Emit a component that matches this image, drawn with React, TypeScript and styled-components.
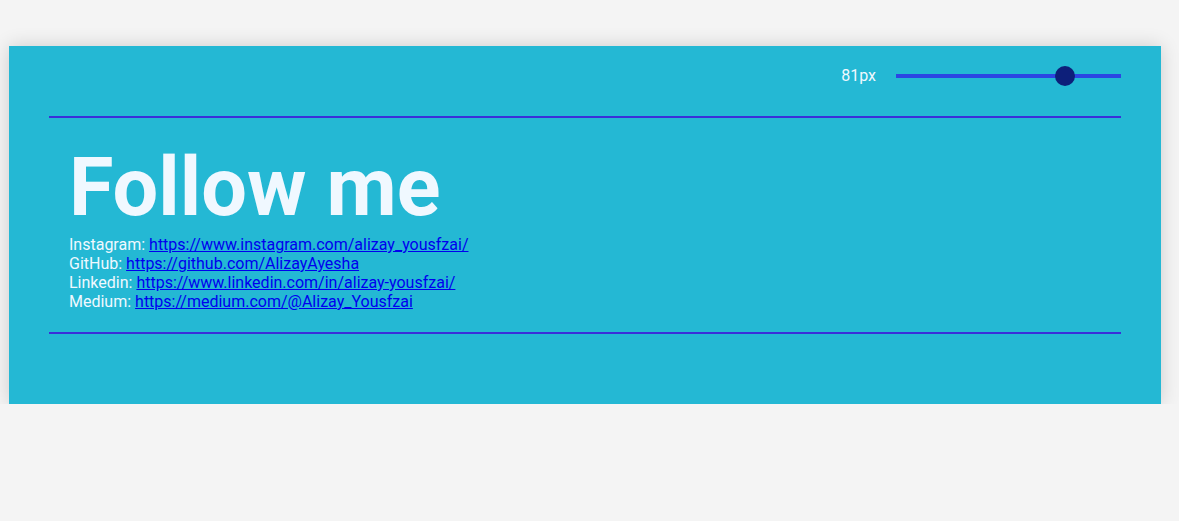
import React, { useState } from "react";
import styled, { createGlobalStyle } from "styled-components";

const Global = createGlobalStyle`
  html, body { margin: 0; padding: 0; background: #f4f4f4; }
  body { font-family: Roboto, "Liberation Sans", sans-serif; }
`;

const Page = styled.div`
  padding: 46px 0 0 9px;
`;

const Card = styled.section`
  width: 1152px;
  box-sizing: border-box;
  background: #24b8d4;
  padding: 0 40px 70px;
  box-shadow: 0 0 18px rgba(0, 0, 0, 0.16);
  color: #f0f8ff;
`;

const Toolbar = styled.div`
  height: 70px;
  display: flex;
  align-items: center;
  justify-content: flex-end;
  gap: 20px;
  padding-bottom: 11px;
  box-sizing: border-box;
`;

const Label = styled.span`
  font-size: 16px;
  line-height: 19px;
  color: #f0f8ff;
`;

const Track = styled.div`
  position: relative;
  width: 225px;
  height: 4px;
  background: #2b45e3;
`;

const Thumb = styled.div`
  position: absolute;
  top: 50%;
  width: 20px;
  height: 20px;
  border-radius: 50%;
  background: #0d1f7a;
  transform: translate(-50%, -50%);
`;

const Rule = styled.hr`
  margin: 0;
  border: 0;
  height: 2px;
  background: #3a2fd9;
`;

const Content = styled.div`
  padding: 22px 20px 21px;
`;

const Title = styled.h1<{ $size: number }>`
  margin: 0;
  font-family: Roboto, "Liberation Sans", sans-serif;
  font-weight: 700;
  font-size: ${(p) => p.$size}px;
  line-height: normal;
  color: #f0f8ff;
`;

const Links = styled.div`
  font-size: 16px;
  line-height: normal;
`;

const Row = styled.div``;

const Link = styled.a`
  color: #0000ee;
  text-decoration: underline;
`;

const links = [
  ["Instagram", "https://www.instagram.com/alizay_yousfzai/"],
  ["GitHub", "https://github.com/AlizayAyesha"],
  ["Linkedin", "https://www.linkedin.com/in/alizay-yousfzai/"],
  ["Medium", "https://medium.com/@Alizay_Yousfzai"],
];

export default function App() {
  const [size] = useState(81);
  const pct = 169 / 225;
  return (
    <>
      <Global />
      <Page>
        <Card>
          <Toolbar>
            <Label>{size}px</Label>
            <Track>
              <Thumb style={{ left: `${pct * 100}%` }} />
            </Track>
          </Toolbar>
          <Rule />
          <Content>
            <Title $size={size}>Follow me</Title>
            <Links>
              {links.map(([name, url]) => (
                <Row key={name}>
                  {name}: <Link href={url}>{url}</Link>
                </Row>
              ))}
            </Links>
          </Content>
          <Rule />
        </Card>
      </Page>
    </>
  );
}
